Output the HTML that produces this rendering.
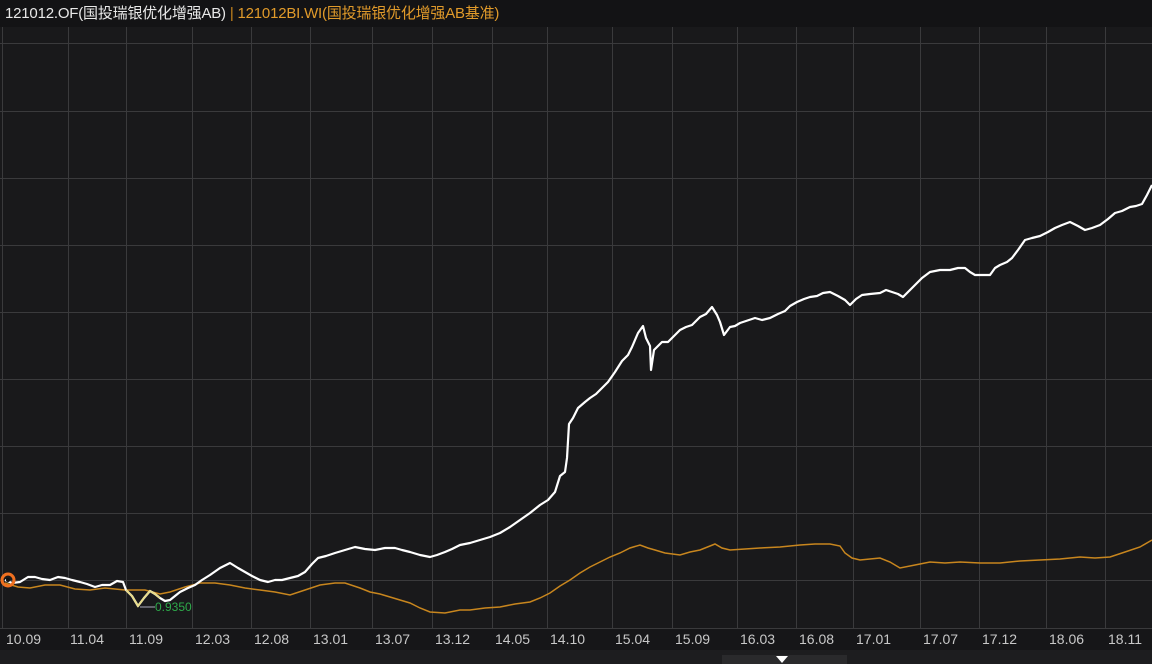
<!DOCTYPE html>
<html><head><meta charset="utf-8"><style>
html,body{margin:0;padding:0;width:1152px;height:664px;overflow:hidden;background:#18181a;font-family:"Liberation Sans","Noto Sans CJK SC",sans-serif}
.hdr{position:absolute;left:0;top:0;width:1152px;height:27px;background:#131315;font-size:15px;line-height:27px;padding-left:5px;box-sizing:border-box;white-space:nowrap;letter-spacing:-0.2px}
</style></head><body>
<svg width="1152" height="664" style="position:absolute;left:0;top:0">
<rect x="0" y="27" width="1152" height="601" fill="#19191b"/>
<g stroke="#3a3a3c" stroke-width="1">
<line x1="0" y1="43.5" x2="1152" y2="43.5"/><line x1="0" y1="111.5" x2="1152" y2="111.5"/><line x1="0" y1="178.5" x2="1152" y2="178.5"/><line x1="0" y1="245.5" x2="1152" y2="245.5"/><line x1="0" y1="312.5" x2="1152" y2="312.5"/><line x1="0" y1="379.5" x2="1152" y2="379.5"/><line x1="0" y1="446.5" x2="1152" y2="446.5"/><line x1="0" y1="513.5" x2="1152" y2="513.5"/><line x1="0" y1="580.5" x2="1152" y2="580.5"/><line x1="0" y1="628.5" x2="1152" y2="628.5"/>
<line x1="2.5" y1="27" x2="2.5" y2="650"/><line x1="68.5" y1="27" x2="68.5" y2="650"/><line x1="126.5" y1="27" x2="126.5" y2="650"/><line x1="192.5" y1="27" x2="192.5" y2="650"/><line x1="251.5" y1="27" x2="251.5" y2="650"/><line x1="310.5" y1="27" x2="310.5" y2="650"/><line x1="372.5" y1="27" x2="372.5" y2="650"/><line x1="432.5" y1="27" x2="432.5" y2="650"/><line x1="492.5" y1="27" x2="492.5" y2="650"/><line x1="547.5" y1="27" x2="547.5" y2="650"/><line x1="612.5" y1="27" x2="612.5" y2="650"/><line x1="672.5" y1="27" x2="672.5" y2="650"/><line x1="737.5" y1="27" x2="737.5" y2="650"/><line x1="796.5" y1="27" x2="796.5" y2="650"/><line x1="853.5" y1="27" x2="853.5" y2="650"/><line x1="920.5" y1="27" x2="920.5" y2="650"/><line x1="979.5" y1="27" x2="979.5" y2="650"/><line x1="1046.5" y1="27" x2="1046.5" y2="650"/><line x1="1105.5" y1="27" x2="1105.5" y2="650"/>
</g>
<rect x="0" y="629" width="1152" height="21" fill="#161618"/>
<rect x="0" y="650" width="1152" height="14" fill="#1d1d1f"/>
<rect x="722" y="655" width="125" height="9" fill="#2a2a2c"/>
<polygon points="776,656 788,656 782,663" fill="#fff"/>
<polyline fill="none" stroke="#c8861e" stroke-width="1.5" points="5,583 18,587 30,588 45,585 60,585 75,589 90,590 105,588 125,590 145,590 160,594 170,592 185,587 200,583 215,583 230,585 245,588 260,590 275,592 290,595 305,590 320,585 335,583 345,583 360,588 370,592 380,594 390,597 400,600 410,603 420,608 430,612 445,613 460,610 470,610 485,608 500,607 515,604 530,602 540,598 550,593 560,586 570,580 580,573 590,567 600,562 610,557 620,553 630,548 640,545 648,548 655,550 665,553 680,555 690,552 700,550 715,544 722,548 730,550 745,549 760,548 780,547 800,545 815,544 830,544 840,546 845,553 852,558 860,560 870,559 880,558 890,562 900,568 915,565 930,562 945,563 960,562 980,563 1000,563 1020,561 1040,560 1060,559 1080,557 1095,558 1110,557 1125,552 1140,547 1152,540"/>
<polyline fill="none" stroke="#fff" stroke-width="2.2" stroke-linejoin="round" points="5,580 12,583 20,582 28,577 35,577 42,579 50,580 58,577 65,578 72,580 80,582 87,584 95,587 102,585 110,585 117,581 123,582 126,590 132,596 138,606 144,598 150,591 155,594 160,598 165,601 170,600 175,596 180,592 188,588 195,585 202,580 210,575 220,568 230,563 238,568 245,572 252,576 260,580 268,582 275,580 282,580 290,578 298,576 305,572 312,564 318,558 326,556 335,553 345,550 355,547 365,549 375,550 385,548 395,548 402,550 410,552 420,555 430,557 437,555 445,552 452,549 460,545 470,543 480,540 490,537 500,533 510,527 520,520 530,513 540,505 548,500 555,492 560,476 565,472 567,458 569,424 573,418 578,408 585,402 590,398 596,394 600,390 608,382 615,372 622,361 628,355 632,347 638,333 643,326 646,338 650,346 651,370 654,350 658,346 662,342 668,342 674,336 680,330 686,327 692,325 700,317 706,314 712,307 717,315 720,322 724,335 730,327 735,326 740,323 746,321 755,318 762,320 770,318 778,314 785,311 790,306 797,302 804,299 810,297 817,296 823,293 830,292 838,296 845,300 850,305 856,299 862,295 870,294 880,293 886,290 892,292 898,294 903,297 910,290 915,285 922,278 930,272 940,270 950,270 958,268 965,268 970,272 975,275 983,275 990,275 995,268 1000,265 1007,262 1012,258 1018,250 1025,240 1032,238 1040,236 1048,232 1055,228 1062,225 1070,222 1078,226 1085,230 1092,228 1100,225 1108,219 1115,213 1122,211 1130,207 1136,206 1142,204 1147,195 1152,185"/>
<polyline fill="none" stroke="#e8dc8a" stroke-width="2" points="126,590 132,596 138,606 144,598 150,591 155,594 160,598"/>
<line x1="140" y1="607" x2="155" y2="607" stroke="#aab" stroke-width="1"/>
<text x="155" y="611" fill="#2eaa4a" font-size="12" font-family="Liberation Sans,sans-serif">0.9350</text>
<circle cx="8" cy="580" r="6" fill="none" stroke="#f07020" stroke-width="3"/>
<circle cx="8" cy="580" r="2" fill="#111"/>
<g fill="#c8c8c8" font-size="14" font-family="Liberation Sans,sans-serif">
<text x="6" y="644">10.09</text><text x="70" y="644">11.04</text><text x="129" y="644">11.09</text><text x="195" y="644">12.03</text><text x="254" y="644">12.08</text><text x="313" y="644">13.01</text><text x="375" y="644">13.07</text><text x="435" y="644">13.12</text><text x="495" y="644">14.05</text><text x="550" y="644">14.10</text><text x="615" y="644">15.04</text><text x="675" y="644">15.09</text><text x="740" y="644">16.03</text><text x="799" y="644">16.08</text><text x="856" y="644">17.01</text><text x="923" y="644">17.07</text><text x="982" y="644">17.12</text><text x="1049" y="644">18.06</text><text x="1108" y="644">18.11</text>
</g>
</svg>
<div class="hdr"><span style="color:#e8e8e8">121012.OF(国投瑞银优化增强AB)</span> <span style="color:#c8861e">|</span> <span style="color:#e09a2a">121012BI.WI(国投瑞银优化增强AB基准)</span></div>
</body></html>
